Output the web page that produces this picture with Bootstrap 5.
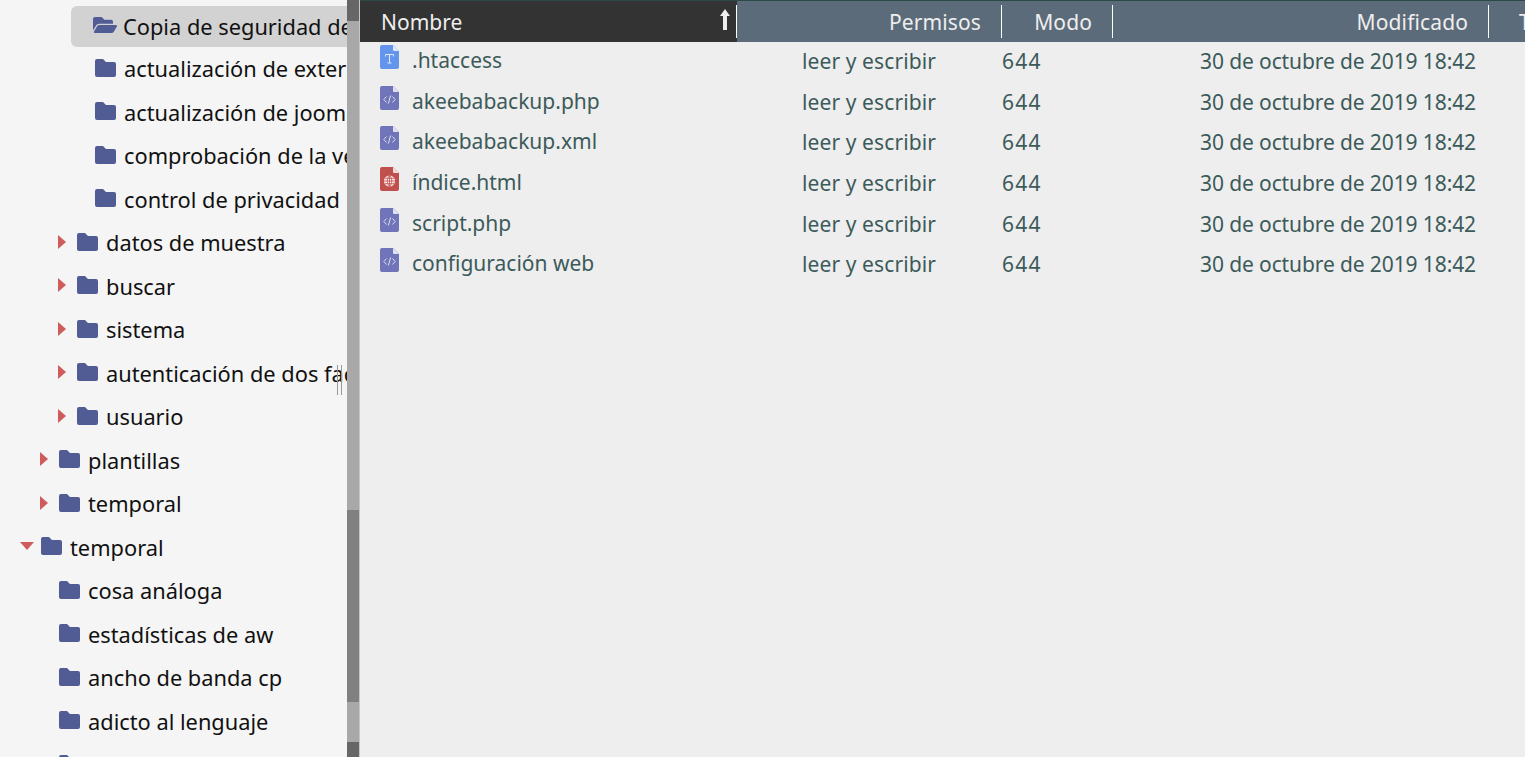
<!DOCTYPE html>
<html lang="es">
<head>
<meta charset="utf-8">
<title>Archivos</title>
<link href="https://cdn.jsdelivr.net/npm/bootstrap@5.3.0/dist/css/bootstrap.min.css" rel="stylesheet">
<style>
html,body{height:757px;overflow:hidden;background:#eee;}
body{font-family:"Noto Sans","Open Sans",sans-serif;font-size:21px;}
.fm-shell{height:757px;}
.fm-tree{width:347px;flex:none;background:#f5f5f5;overflow:hidden;padding-top:3.8px;position:relative;font-size:21.8px;}
.fm-node{height:43.5px;white-space:nowrap;color:#111;line-height:1;position:relative;}
.fm-node.lv1{padding-left:20px;}
.fm-node.lv2{padding-left:38px;}
.fm-node.lv3{padding-left:56px;}
.fm-node.lv4{padding-left:74px;}
.fm-caret{width:21px;flex:none;display:flex;}
.fm-caret svg{display:block;margin-top:-2.4px;}
.fm-caret svg.fm-tri{margin-left:2px;}
.fm-folder{width:21px;height:18px;flex:none;margin-right:8px;margin-top:-2.4px;fill:#525c94;}
.fm-active{background:#d2d2d2;border-radius:6px 0 0 6px;height:41px;margin:2.1px 0 .4px 71px;padding-left:22px;}
.fm-active .fm-folder{width:24px;margin-right:6px;margin-top:-3px;}
.fm-active span{padding-top:2px;}
.fm-bar{width:12px;flex:none;background:#a8a8a8;}
.fm-bar-end{height:21px;background:#666;flex:none;}
.fm-bar-mid{flex:1;display:flex;flex-direction:column;}
.fm-bar-gap{height:489px;flex:none;}
.fm-bar-thumb{height:192px;background:#808080;flex:none;}
.fm-bar-low{flex:1;}
.fm-bar-foot{height:15px;background:#666;flex:none;}
.fm-edge{width:1px;flex:none;background:#c6c6c6;}
.fm-main{flex:1;min-width:0;overflow:hidden;background:#eee;}
.fm-table{table-layout:fixed;width:1240px;margin:0;--bs-table-bg:transparent;color:#3c5a5a;border-collapse:separate;border-spacing:0;}
.fm-table th{height:42px;padding:0;background:#5c6b7a;color:#eee;font-weight:400;border:0;border-top:1px solid #2a4a48;vertical-align:middle;position:relative;letter-spacing:.12px;}
.fm-table th.fm-sorted{background:#333;letter-spacing:0;}
.fm-table td{height:40.6px;padding:0 0 1.2px;border:0;vertical-align:middle;color:#3c5a5a;line-height:1;}
.fm-cellhead{display:flex;align-items:center;justify-content:flex-end;height:33px;border-right:1px solid #fff;padding-right:20px;padding-top:3px;}
.fm-cellhead.fm-left{justify-content:space-between;padding-left:21px;padding-right:6px;}
.fm-cellhead.fm-left svg{margin-bottom:7px;}
.fm-cellhead.fm-none{border:0;justify-content:flex-start;padding-left:30px;}
.fm-file{display:flex;align-items:center;padding-left:20px;margin-top:-2px;}
.fm-file svg{width:19px;height:24px;flex:none;margin-right:13px;margin-top:-7px;}
.fm-file-name{white-space:nowrap;}
.fm-pad-perm{padding-left:65px!important;letter-spacing:.1px;}
.fm-mode{letter-spacing:1.3px;}
.fm-pad-date{padding-left:87px!important;white-space:nowrap;letter-spacing:-.11px;}
.fm-cursor{position:absolute;left:337px;top:365px;width:5px;height:30px;border-left:1px solid #999;border-right:1px solid #999;}
</style>
</head>
<body>
<svg width="0" height="0" class="position-absolute">
  <defs>
    <symbol id="i-folder" viewBox="0 0 21 18"><path d="M2 0H8L11 3H19a2 2 0 0 1 2 2V16a2 2 0 0 1-2 2H2a2 2 0 0 1-2-2V2a2 2 0 0 1 2-2Z"/></symbol>
    <symbol id="i-open" viewBox="0 64 576 384"><path d="M572.694 292.093L500.27 416.248A63.997 63.997 0 0 1 444.989 448H45.025c-18.523 0-30.064-20.093-20.731-36.093l72.424-124.155A64 64 0 0 1 152 256h399.964c18.523 0 30.064 20.093 20.73 36.093zM152 224h328v-48c0-26.51-21.49-48-48-48H272l-64-64H48C21.49 64 0 85.49 0 112v278.046l69.077-118.418C86.214 242.25 117.989 224 152 224z"/></symbol>
    <symbol id="i-right" viewBox="0 0 8 14"><path d="M0 0L8 7L0 14Z" fill="#cf5c5c"/></symbol>
    <symbol id="i-down" viewBox="0 0 14 8"><path d="M0 0H14L7 8Z" fill="#cf5c5c"/></symbol>
    <symbol id="i-code" viewBox="0 0 19 24">
      <path d="M2 0H13L19 6V22a2 2 0 0 1-2 2H2a2 2 0 0 1-2-2V2a2 2 0 0 1 2-2Z" fill="#7074b8"/>
      <path d="M13 0L19 6H14a1 1 0 0 1-1-1Z" fill="#dfe0f2"/>
      <path d="M6.6 10.5L3.8 13.5L6.6 16.5M12.4 10.5L15.2 13.5L12.4 16.5M10.6 9.5L8.4 17.5" fill="none" stroke="#dfe0f2" stroke-width="1"/>
    </symbol>
    <symbol id="i-text" viewBox="0 0 19 24">
      <path d="M2 0H13L19 6V22a2 2 0 0 1-2 2H2a2 2 0 0 1-2-2V2a2 2 0 0 1 2-2Z" fill="#6495ed"/>
      <path d="M13 0L19 6H14a1 1 0 0 1-1-1Z" fill="#dce7fb"/>
      <path d="M5.5 11.5V9.5H13.5V11.5M9.5 9.5V18M7.5 18H11.5" fill="none" stroke="#dce7fb" stroke-width="1"/>
    </symbol>
    <symbol id="i-web" viewBox="0 0 19 24">
      <path d="M2 0H13L19 6V22a2 2 0 0 1-2 2H2a2 2 0 0 1-2-2V2a2 2 0 0 1 2-2Z" fill="#c0504d"/>
      <path d="M13 0L19 6H14a1 1 0 0 1-1-1Z" fill="#f3dcdb"/>
      <circle cx="9.5" cy="14" r="5.6" fill="#f7e6e5"/>
      <path d="M4 14H15M4.8 11.3H14.2M4.8 16.7H14.2M9.5 8.4V19.6M9.5 8.4C6.6 11 6.6 17 9.5 19.6M9.5 8.4C12.4 11 12.4 17 9.5 19.6" fill="none" stroke="#c0504d" stroke-width=".8"/>
    </symbol>
  </defs>
</svg>
<div class="d-flex fm-shell">
  <div class="fm-tree">
    <div class="fm-node fm-active d-flex align-items-center"><svg class="fm-folder"><use href="#i-open"/></svg><span>Copia de seguridad de</span></div>
    <div class="fm-node lv4 d-flex align-items-center"><span class="fm-caret"></span><svg class="fm-folder"><use href="#i-folder"/></svg>actualización de exter</div>
    <div class="fm-node lv4 d-flex align-items-center"><span class="fm-caret"></span><svg class="fm-folder"><use href="#i-folder"/></svg>actualización de joom</div>
    <div class="fm-node lv4 d-flex align-items-center"><span class="fm-caret"></span><svg class="fm-folder"><use href="#i-folder"/></svg>comprobación de la ve</div>
    <div class="fm-node lv4 d-flex align-items-center"><span class="fm-caret"></span><svg class="fm-folder"><use href="#i-folder"/></svg>control de privacidad</div>
    <div class="fm-node lv3 d-flex align-items-center"><span class="fm-caret"><svg width="8" height="14" class="fm-tri"><use href="#i-right"/></svg></span><svg class="fm-folder"><use href="#i-folder"/></svg>datos de muestra</div>
    <div class="fm-node lv3 d-flex align-items-center"><span class="fm-caret"><svg width="8" height="14" class="fm-tri"><use href="#i-right"/></svg></span><svg class="fm-folder"><use href="#i-folder"/></svg>buscar</div>
    <div class="fm-node lv3 d-flex align-items-center"><span class="fm-caret"><svg width="8" height="14" class="fm-tri"><use href="#i-right"/></svg></span><svg class="fm-folder"><use href="#i-folder"/></svg>sistema</div>
    <div class="fm-node lv3 d-flex align-items-center"><span class="fm-caret"><svg width="8" height="14" class="fm-tri"><use href="#i-right"/></svg></span><svg class="fm-folder"><use href="#i-folder"/></svg>autenticación de dos fac</div>
    <div class="fm-node lv3 d-flex align-items-center"><span class="fm-caret"><svg width="8" height="14" class="fm-tri"><use href="#i-right"/></svg></span><svg class="fm-folder"><use href="#i-folder"/></svg>usuario</div>
    <div class="fm-node lv2 d-flex align-items-center"><span class="fm-caret"><svg width="8" height="14" class="fm-tri"><use href="#i-right"/></svg></span><svg class="fm-folder"><use href="#i-folder"/></svg>plantillas</div>
    <div class="fm-node lv2 d-flex align-items-center"><span class="fm-caret"><svg width="8" height="14" class="fm-tri"><use href="#i-right"/></svg></span><svg class="fm-folder"><use href="#i-folder"/></svg>temporal</div>
    <div class="fm-node lv1 d-flex align-items-center"><span class="fm-caret"><svg width="14" height="8"><use href="#i-down"/></svg></span><svg class="fm-folder"><use href="#i-folder"/></svg>temporal</div>
    <div class="fm-node lv2 d-flex align-items-center"><span class="fm-caret"></span><svg class="fm-folder"><use href="#i-folder"/></svg>cosa análoga</div>
    <div class="fm-node lv2 d-flex align-items-center"><span class="fm-caret"></span><svg class="fm-folder"><use href="#i-folder"/></svg>estadísticas de aw</div>
    <div class="fm-node lv2 d-flex align-items-center"><span class="fm-caret"></span><svg class="fm-folder"><use href="#i-folder"/></svg>ancho de banda cp</div>
    <div class="fm-node lv2 d-flex align-items-center"><span class="fm-caret"></span><svg class="fm-folder"><use href="#i-folder"/></svg>adicto al lenguaje</div>
    <div class="fm-node lv2 d-flex align-items-center"><span class="fm-caret"></span><svg class="fm-folder"><use href="#i-folder"/></svg></div>
    <div class="fm-cursor"></div>
  </div>
  <div class="fm-bar d-flex flex-column">
    <div class="fm-bar-end"></div>
    <div class="fm-bar-mid">
      <div class="fm-bar-gap"></div>
      <div class="fm-bar-thumb"></div>
      <div class="fm-bar-low"></div>
    </div>
    <div class="fm-bar-foot"></div>
  </div>
  <div class="fm-edge"></div>
  <div class="fm-main">
    <table class="table fm-table">
      <colgroup><col style="width:377px"><col style="width:265px"><col style="width:111px"><col style="width:376px"><col style="width:111px"></colgroup>
      <thead>
        <tr>
          <th class="fm-sorted"><div class="fm-cellhead fm-left"><span>Nombre</span><svg width="10" height="21" viewBox="0 0 10 21"><path d="M5 0L10 7H7V21H3V7H0Z" fill="#eee"/></svg></div></th>
          <th><div class="fm-cellhead">Permisos</div></th>
          <th><div class="fm-cellhead">Modo</div></th>
          <th><div class="fm-cellhead">Modificado</div></th>
          <th><div class="fm-cellhead fm-none">T</div></th>
        </tr>
      </thead>
      <tbody>
        <tr><td><div class="fm-file"><svg><use href="#i-text"/></svg><span class="fm-file-name">.htaccess</span></div></td><td class="fm-pad-perm">leer y escribir</td><td class="fm-mode">644</td><td class="fm-pad-date">30 de octubre de 2019 18:42</td><td></td></tr>
        <tr><td><div class="fm-file"><svg><use href="#i-code"/></svg><span class="fm-file-name">akeebabackup.php</span></div></td><td class="fm-pad-perm">leer y escribir</td><td class="fm-mode">644</td><td class="fm-pad-date">30 de octubre de 2019 18:42</td><td></td></tr>
        <tr><td><div class="fm-file"><svg><use href="#i-code"/></svg><span class="fm-file-name">akeebabackup.xml</span></div></td><td class="fm-pad-perm">leer y escribir</td><td class="fm-mode">644</td><td class="fm-pad-date">30 de octubre de 2019 18:42</td><td></td></tr>
        <tr><td><div class="fm-file"><svg><use href="#i-web"/></svg><span class="fm-file-name">índice.html</span></div></td><td class="fm-pad-perm">leer y escribir</td><td class="fm-mode">644</td><td class="fm-pad-date">30 de octubre de 2019 18:42</td><td></td></tr>
        <tr><td><div class="fm-file"><svg><use href="#i-code"/></svg><span class="fm-file-name">script.php</span></div></td><td class="fm-pad-perm">leer y escribir</td><td class="fm-mode">644</td><td class="fm-pad-date">30 de octubre de 2019 18:42</td><td></td></tr>
        <tr><td><div class="fm-file"><svg><use href="#i-code"/></svg><span class="fm-file-name">configuración web</span></div></td><td class="fm-pad-perm">leer y escribir</td><td class="fm-mode">644</td><td class="fm-pad-date">30 de octubre de 2019 18:42</td><td></td></tr>
      </tbody>
    </table>
  </div>
</div>
</body>
</html>
